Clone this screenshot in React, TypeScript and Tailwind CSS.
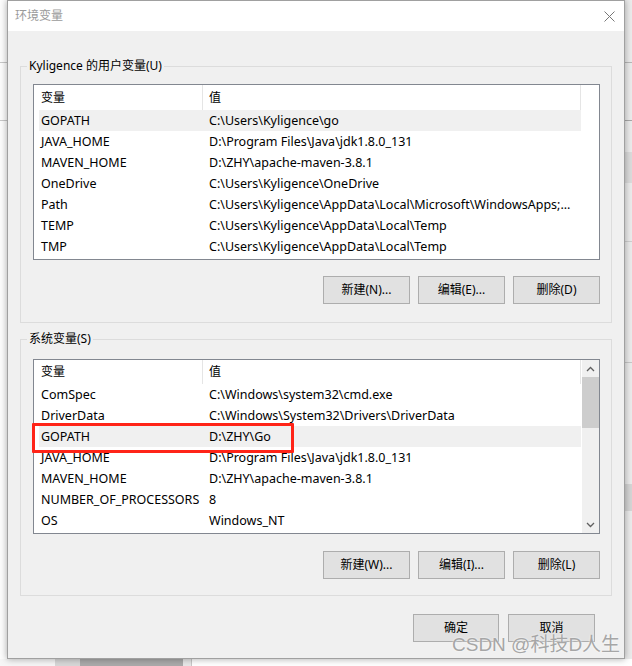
import React from "react"

const FONT = { fontFamily: "'Noto Sans', 'Noto Sans CJK SC', sans-serif" }

const userVars: [string, string][] = [
  ["GOPATH", "C:\\Users\\Kyligence\\go"],
  ["JAVA_HOME", "D:\\Program Files\\Java\\jdk1.8.0_131"],
  ["MAVEN_HOME", "D:\\ZHY\\apache-maven-3.8.1"],
  ["OneDrive", "C:\\Users\\Kyligence\\OneDrive"],
  ["Path", "C:\\Users\\Kyligence\\AppData\\Local\\Microsoft\\WindowsApps;..."],
  ["TEMP", "C:\\Users\\Kyligence\\AppData\\Local\\Temp"],
  ["TMP", "C:\\Users\\Kyligence\\AppData\\Local\\Temp"],
]

const sysVars: [string, string][] = [
  ["ComSpec", "C:\\Windows\\system32\\cmd.exe"],
  ["DriverData", "C:\\Windows\\System32\\Drivers\\DriverData"],
  ["GOPATH", "D:\\ZHY\\Go"],
  ["JAVA_HOME", "D:\\Program Files\\Java\\jdk1.8.0_131"],
  ["MAVEN_HOME", "D:\\ZHY\\apache-maven-3.8.1"],
  ["NUMBER_OF_PROCESSORS", "8"],
  ["OS", "Windows_NT"],
]

const Btn = ({ label, w = "w-[87px]" }: { label: string; w?: string }) => (
  <div className={`${w} h-[28px] flex items-center justify-center bg-[#e1e1e1] border border-[#adadad] text-[12px] text-black`}>
    {label}
  </div>
)

const VarList = ({
  rows,
  headerH,
  selected,
}: {
  rows: [string, string][]
  headerH: string
  selected: number
}) => (
  <div className="ml-[5px] w-[542px] flex flex-col text-[12.5px] text-black">
    <div className={`${headerH} flex items-center text-[12px]`}>
      <div className="w-[164px] h-full pl-[2px] flex items-center border-r border-[#e5e5e5]">变量</div>
      <div className="w-[378px] h-full pl-[6px] flex items-center border-r border-[#e5e5e5]">值</div>
    </div>
    {rows.map(([k, v], i) => (
      <div key={k} className={`h-[21px] pt-[1px] flex items-center ${i === selected ? "bg-[#f0f0f0]" : ""}`}>
        <div className="w-[164px] pl-[2px] whitespace-nowrap">{k}</div>
        <div className="w-[378px] pl-[6px] whitespace-nowrap overflow-hidden">{v}</div>
      </div>
    ))}
  </div>
)

const Chevron = ({ up }: { up?: boolean }) => (
  <svg width="9" height="6" viewBox="0 0 9 6">
    <path
      d={up ? "M1 5 L4.5 1.5 L8 5" : "M1 1 L4.5 4.5 L8 1"}
      fill="none"
      stroke="#606060"
      strokeWidth="1.3"
    />
  </svg>
)

const Group = ({ title, children, className = "" }: { title: string; children: React.ReactNode; className?: string }) => (
  <fieldset className={`border border-[#dcdcdc] ${className}`}>
    <legend className="ml-[6px] px-[2px] text-[12px] leading-[16px] text-black">{title}</legend>
    {children}
  </fieldset>
)

export default function App() {
  return (
    <div className="w-[632px] h-[666px] overflow-hidden bg-white flex flex-col relative" style={FONT}>
      <div className="h-[659px] flex">
        {/* background app, left */}
        <div className="w-[7px] flex flex-col bg-[#fdfdfd]">
          <div className="h-[63px] border-b border-[#c8c8c8]" />
          <div className="h-[58px] border-b border-[#c8c8c8]" />
        </div>

        {/* dialog */}
        <div className="w-[618px] border border-[#a0a0a0] flex flex-col shadow-[0_0_7px_rgba(0,0,0,0.35)] relative z-10">
          <div className="h-[30px] bg-white flex items-center justify-between pl-[7px] pr-[9px]">
            <span className="text-[12px] text-[#9a9a9a]">环境变量</span>
            <svg width="11" height="11" viewBox="0 0 11 11">
              <path d="M0.5 0.5 L10.5 10.5 M10.5 0.5 L0.5 10.5" stroke="#777" strokeWidth="1" />
            </svg>
          </div>

          <div className="flex-1 bg-[#f0f0f0] px-[12px] flex flex-col">
            <Group title="Kyligence 的用户变量(U)" className="mt-[27px]">
              <div className="pt-[10px] pl-[12px] pr-[11px] pb-[18px] flex flex-col">
                <div className="h-[176px] border border-[#828790] bg-white">
                  <VarList rows={userVars} headerH="h-[25px]" selected={0} />
                </div>
                <div className="mt-[16px] flex justify-end gap-[8px]">
                  <Btn label="新建(N)..." />
                  <Btn label="编辑(E)..." />
                  <Btn label="删除(D)" />
                </div>
              </div>
            </Group>

            <Group title="系统变量(S)" className="mt-[8px]">
              <div className="pt-[12px] pl-[12px] pr-[11px] pb-[16px] flex flex-col">
                <div className="h-[175px] border border-[#828790] bg-white flex relative">
                  <VarList rows={sysVars} headerH="h-[24px]" selected={2} />
                  <div className="flex-1" />
                  <div className="w-[17px] bg-[#f0f0f0] flex flex-col items-center">
                    <div className="h-[17px] flex items-center justify-center">
                      <Chevron up />
                    </div>
                    <div className="w-full h-[51px] bg-[#cdcdcd]" />
                    <div className="flex-1" />
                    <div className="h-[17px] flex items-center justify-center">
                      <Chevron />
                    </div>
                  </div>
                  {/* annotation */}
                  <div className="absolute left-[-2px] top-[63px] w-[262px] h-[30px] border-[3px] border-[#ff2418] rounded-[1px]" />
                </div>
                <div className="mt-[17px] flex justify-end gap-[8px]">
                  <Btn label="新建(W)..." />
                  <Btn label="编辑(I)..." />
                  <Btn label="删除(L)" />
                </div>
              </div>
            </Group>

            <div className="mt-[18px] flex justify-end gap-[9px] pr-[17px]">
              <Btn label="确定" w="w-[86px]" />
              <Btn label="取消" w="w-[87px]" />
            </div>
          </div>
        </div>

        {/* background app, right */}
        <div className="flex-1 flex flex-col bg-[#ececec]">
          <div className="h-[63px] border-b border-[#b8b8b8]" />
          <div className="h-[58px] border-b border-[#a8a8a8]" />
          <div className="h-[31px]" />
          <div className="h-[31px] bg-[#dcdcdc]" />
          <div className="h-[59px] border-b border-[#d0d0d0]" />
          <div className="h-[121px] border-b border-[#c8c8c8]" />
          <div className="h-[121px]" />
          <div className="h-[27px] bg-[#d6d6d6]" />
        </div>
      </div>

      {/* background app, bottom */}
      <div className="flex-1 flex">
        <div className="w-[55px] bg-[#f6f6f6]" />
        <div className="w-[25px] bg-[#d8d8d8]" />
        <div className="w-[103px] bg-[#ababab]" />
        <div className="w-[9px] bg-[#e8e8e8] border-r border-[#c8c8c8]" />
        <div className="flex-1 bg-white" />
      </div>

      {/* watermark */}
      <div
        className="absolute left-[452px] top-[633px] z-20 text-[19px] leading-[24px] text-[#a6a6a6] whitespace-nowrap [text-shadow:0_0_2px_#fff]"
        style={{ fontFamily: "'Liberation Sans', 'Noto Sans CJK SC', sans-serif" }}
      >
        CSDN @科技D人生
      </div>
    </div>
  )
}
